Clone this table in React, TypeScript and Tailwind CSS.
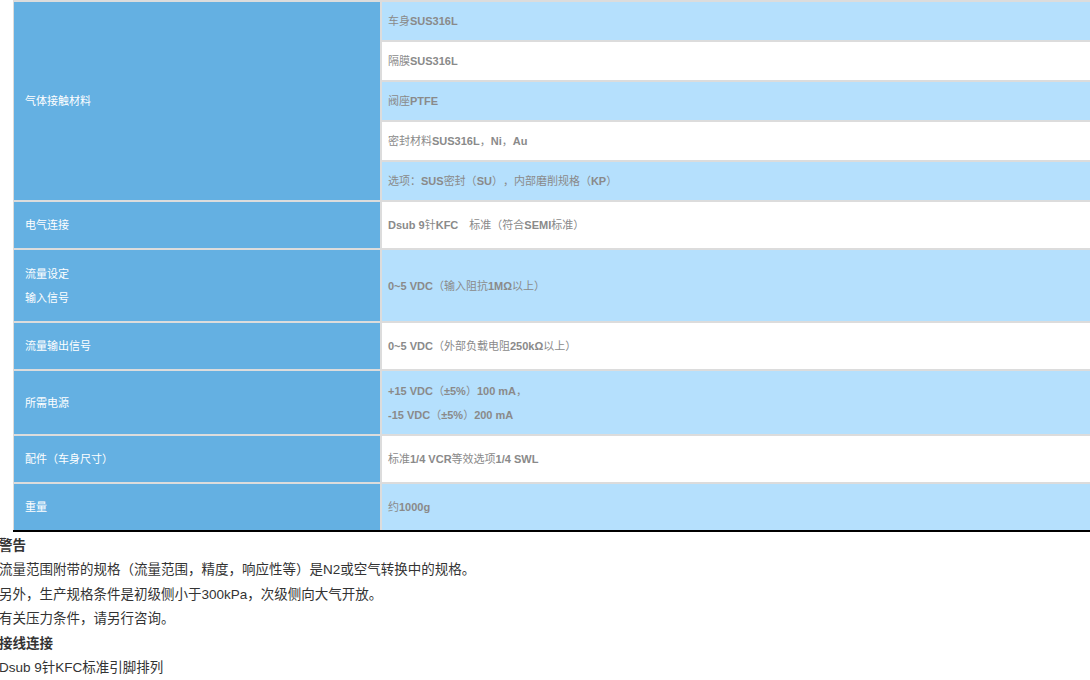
import { Fragment } from "react"

const CJK = /([\u3000-\u303f\u4e00-\u9fff\uff00-\uffef]+)/
const CJK_TEST = /[\u3000-\u303f\u4e00-\u9fff\uff00-\uffef]/

// Latin runs are bold, Chinese runs stay regular (as in the source page)
function Mixed({ text }: { text: string }) {
    return (
        <Fragment>
            {text.split(CJK).map((part, i) =>
                part === '' ? null : CJK_TEST.test(part) ?
                    <span key={i} className="font-normal">{part}</span>
                    :
                    <span key={i} className="font-bold">{part}</span>
            )}
        </Fragment>
    )
}

type Row = {
    label: string[],
    value: string[],
    height: string,
    light: boolean
}

const materials = [
    { text: '车身SUS316L', light: true },
    { text: '隔膜SUS316L', light: false },
    { text: '阀座PTFE', light: true },
    { text: '密封材料SUS316L，Ni，Au', light: false },
    { text: '选项：SUS密封（SU），内部磨削规格（KP）', light: true },
]

const rows: Row[] = [
    { label: ['电气连接'], value: ['Dsub 9针KFC\u3000标准（符合SEMI标准）'], height: 'h-[46px]', light: false },
    { label: ['流量设定', '输入信号'], value: ['0~5 VDC（输入阻抗1MΩ以上）'], height: 'h-[71px]', light: true },
    { label: ['流量输出信号'], value: ['0~5 VDC（外部负载电阻250kΩ以上）'], height: 'h-[46px]', light: false },
    { label: ['所需电源'], value: ['+15 VDC（±5%）100 mA，', '-15 VDC（±5%）200 mA'], height: 'h-[63px]', light: true },
    { label: ['配件（车身尺寸）'], value: ['标准1/4 VCR等效选项1/4 SWL'], height: 'h-[46px]', light: false },
    { label: ['重量'], value: ['约1000g'], height: 'h-[46px]', light: true },
]

const notes = [
    { text: '警告', bold: true },
    { text: '流量范围附带的规格（流量范围，精度，响应性等）是N2或空气转换中的规格。', bold: false },
    { text: '另外，生产规格条件是初级侧小于300kPa，次级侧向大气开放。', bold: false },
    { text: '有关压力条件，请另行咨询。', bold: false },
    { text: '接线连接', bold: true },
    { text: 'Dsub 9针KFC标准引脚排列', bold: false },
]

export default function App() {
    // Jsx ----------------------------------->
    return (
        <div className="w-[1090px] h-[680px] overflow-hidden bg-white font-['Liberation_Sans','Noto_Sans_CJK_SC',sans-serif] [text-spacing-trim:space-all]">
            {/* Spec table */}
            <div className="ml-[13px] w-[1100px] bg-[#dcdcdc] pl-[1px] pt-[2px] flex flex-col gap-[2px] border-b-2 border-black text-[11px] leading-[24px]">
                <div className="flex gap-[2px]">
                    <div className="w-[366px] shrink-0 bg-[#64b0e2] text-white pl-[11px] flex items-center">
                        气体接触材料
                    </div>
                    <div className="flex-1 flex flex-col gap-[2px]">
                        {materials.map((m) => (
                            <div
                                key={m.text}
                                className={`h-[38px] pl-[6px] flex items-center text-[#8a8a8a] ${m.light ? 'bg-[#b5e0fd]' : 'bg-white'}`}
                            >
                                <span><Mixed text={m.text} /></span>
                            </div>
                        ))}
                    </div>
                </div>

                {rows.map((r) => (
                    <div key={r.label.join()} className={`flex gap-[2px] ${r.height}`}>
                        <div className="w-[366px] shrink-0 bg-[#64b0e2] text-white pl-[11px] flex flex-col justify-center">
                            {r.label.map((l) => <span key={l}>{l}</span>)}
                        </div>
                        <div className={`flex-1 pl-[6px] flex flex-col justify-center text-[#8a8a8a] ${r.light ? 'bg-[#b5e0fd]' : 'bg-white'}`}>
                            {r.value.map((v) => <span key={v}><Mixed text={v} /></span>)}
                        </div>
                    </div>
                ))}
            </div>

            {/* Notes */}
            <div className="mt-[2px] -ml-[1px] text-[13.5px] leading-[24.4px] text-[#333]">
                {notes.map((n) => (
                    <p key={n.text} className={n.bold ? 'font-bold' : 'font-normal'}>{n.text}</p>
                ))}
            </div>
        </div>
    )
}
